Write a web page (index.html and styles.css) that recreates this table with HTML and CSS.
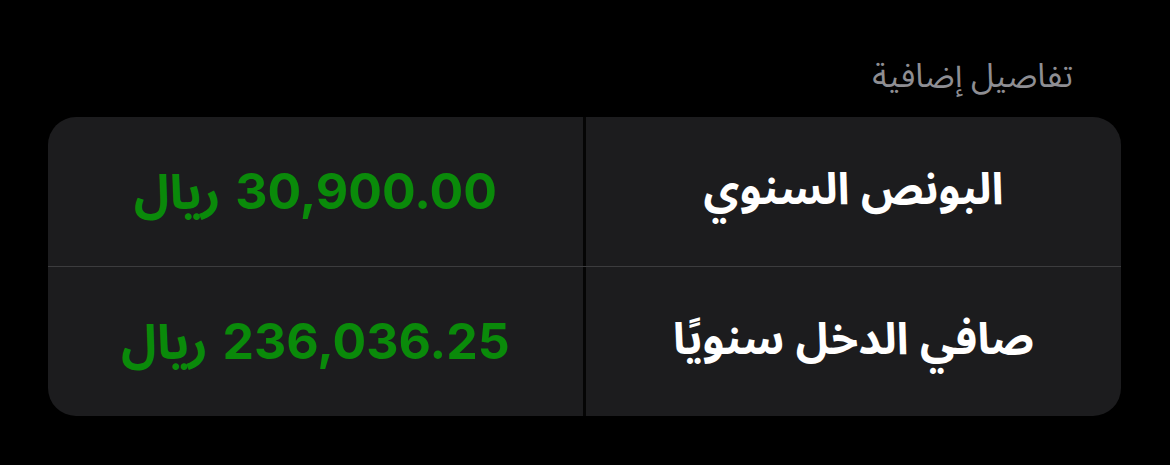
FILE: index.html
```html
<!DOCTYPE html>
<html lang="ar" dir="rtl">
<head>
<meta charset="utf-8">
<link rel="stylesheet" href="styles.css">
</head>
<body>
  <div class="section">
    <div class="section-title">تفاصيل إضافية</div>
    <div class="card">
      <div class="row">
        <div class="cell label">البونص السنوي</div>
        <div class="divider"></div>
        <div class="cell"><div class="value"><span class="num">30,900.00</span><span class="cur">ريال</span></div></div>
      </div>
      <div class="row row-sep">
        <div class="cell label">صافي الدخل سنويًا</div>
        <div class="divider"></div>
        <div class="cell"><div class="value"><span class="num">236,036.25</span><span class="cur">ريال</span></div></div>
      </div>
    </div>
  </div>
</body>
</html>
```
FILE: styles.css
```css
html, body {
  margin: 0;
  padding: 0;
  background: #000;
}
body {
  width: 1170px;
  height: 465px;
  overflow: hidden;
  font-family: "Noto Sans Arabic", "Noto Naskh Arabic", "DejaVu Sans", sans-serif;
}
.section {
  padding: 54px 49px 0 48px;
}
.section-title {
  color: #8e8e93;
  font-size: 33px;
  line-height: 46px;
  padding-right: 48px;
  margin-bottom: 17px;
}
.card {
  background: #1c1c1e;
  border-radius: 28px;
  overflow: hidden;
  display: flex;
  flex-direction: column;
}
.row {
  display: flex;
  height: 149px;
}
.row-sep {
  border-top: 1px solid #3c3c3e;
}
.cell {
  flex: 1;
  display: flex;
  align-items: center;
  justify-content: center;
  font-weight: bold;
}
.divider {
  width: 3px;
  background: #050505;
}
.label {
  color: #fff;
  font-size: 44px;
  padding-bottom: 4px;
}
.value {
  color: #0a8a0a;
  display: flex;
  gap: 15px;
  align-items: baseline;
  line-height: 1;
}
.num {
  font-family: "Inter", "Liberation Sans", sans-serif;
  font-size: 50px;
  font-weight: 700;
  direction: ltr;
  unicode-bidi: isolate;
}
.cur {
  font-size: 48px;
  font-weight: bold;
}
```
